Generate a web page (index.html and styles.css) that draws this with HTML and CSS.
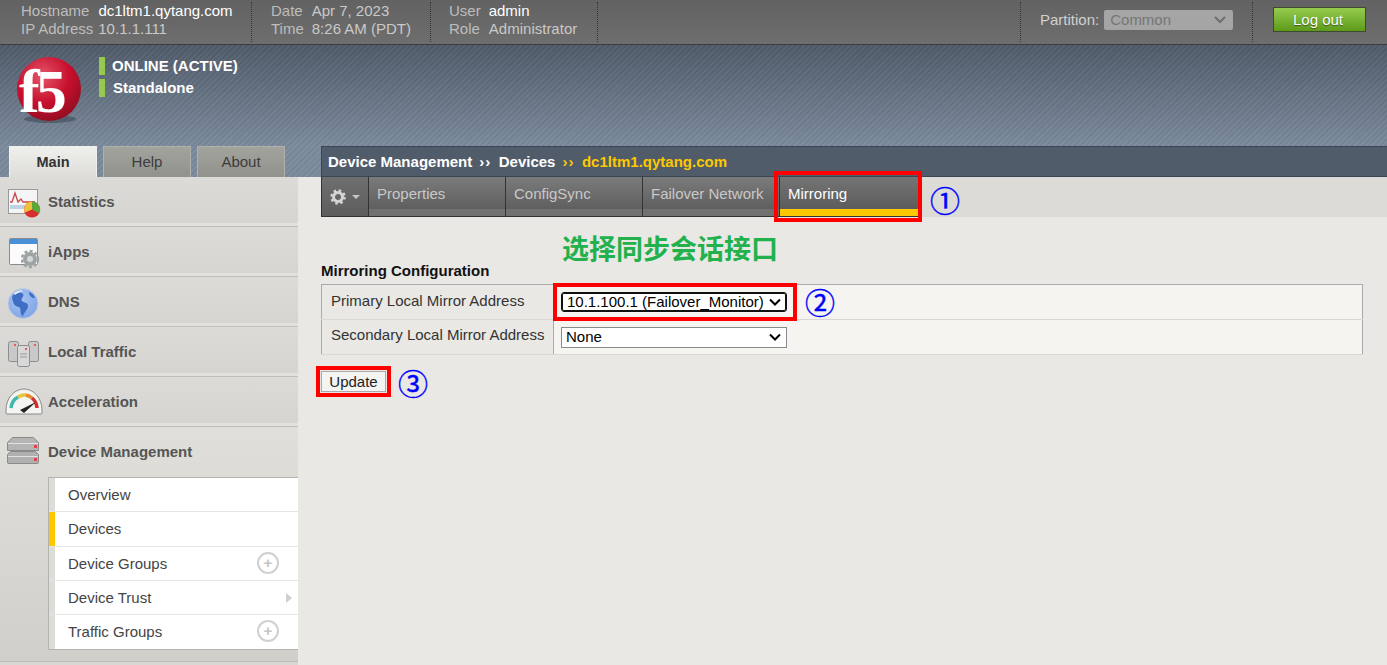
FILE: index.html
```html
<!DOCTYPE html>
<html lang="en">
<head>
    <meta charset="UTF-8">
    <meta name="viewport" content="width=device-width, initial-scale=1.0">
    <title>Mirroring</title>
    <link rel="stylesheet" href="styles.css">
</head>
<body>
    <header class="topbar">
        <div class="info info-host">
            <div><span class="key">Hostname</span><span class="val strong">dc1ltm1.qytang.com</span></div>
            <div><span class="key">IP Address</span><span class="val">10.1.1.111</span></div>
        </div>
        <div class="info info-date">
            <div><span class="key">Date</span><span class="val">Apr 7, 2023</span></div>
            <div><span class="key">Time</span><span class="val">8:26 AM (PDT)</span></div>
        </div>
        <div class="info info-user">
            <div><span class="key">User</span><span class="val strong">admin</span></div>
            <div><span class="key">Role</span><span class="val">Administrator</span></div>
        </div>
        <div class="partition">
            <span class="partition-label">Partition:</span>
            <div class="partition-select">
                <span>Common</span>
                <svg width="14" height="8" viewBox="0 0 14 8"><path d="M2 1l5 5 5-5" fill="none" stroke="#6f6f6f" stroke-width="2"/></svg>
            </div>
        </div>
        <div class="logout-wrap"><button class="logout">Log out</button></div>
    </header>

    <section class="banner">
        <div class="brand">
            <svg class="logo" width="70" height="70" viewBox="0 0 70 70">
                <defs>
                    <radialGradient id="ball" cx="0.4" cy="0.3" r="0.75">
                        <stop offset="0" stop-color="#e4566a"/>
                        <stop offset="0.55" stop-color="#c8102e"/>
                        <stop offset="1" stop-color="#8f0d20"/>
                    </radialGradient>
                </defs>
                <ellipse cx="33" cy="62" rx="26" ry="4" fill="#3d4650" opacity="0.55"/>
                <circle cx="32" cy="32" r="32" fill="url(#ball)"/>
                <text class="logo-text" x="2" y="55">f5</text>
            </svg>
            <div class="status">
                <div class="status-row">ONLINE (ACTIVE)</div>
                <div class="status-row status-sub">Standalone</div>
            </div>
        </div>
        <div class="banner-bottom">
            <nav class="tabs">
                <a class="tab tab-on">Main</a>
                <a class="tab">Help</a>
                <a class="tab">About</a>
            </nav>
            <div class="crumbs">
                <span>Device Management</span><span class="sep">››</span><span>Devices</span><span class="sep sep-cur">››</span><span class="cur">dc1ltm1.qytang.com</span>
            </div>
        </div>
    </section>

    <div class="layout">
        <aside class="sidebar">
            <div class="nav-item">
                <svg class="nav-icon" width="40" height="36" viewBox="0 0 40 36">
                    <rect x="3.500" y="5.500" width="29" height="24" fill="#f5f5f5" stroke="#999"/>
                    <rect x="5" y="21" width="26" height="4" fill="#bcd3e6"/>
                    <path d="M5 18h2l3-9 3 9 3-3 2 3h12" fill="none" stroke="#c8464a" stroke-width="1.300"/>
                    <circle cx="27" cy="25.500" r="8" fill="#d92c2c"/>
                    <path d="M27 25.500v-8a8 8 0 0 1 7 12z" fill="#5da63a"/>
                    <path d="M27 25.500v-8a8 8 0 0 0-8 8 8 8 0 0 0 1 3z" fill="#efc13a"/>
                </svg>
                <span>Statistics</span>
            </div>
            <div class="nav-item">
                <svg class="nav-icon" width="40" height="36" viewBox="0 0 40 36">
                    <rect x="4.500" y="4.500" width="28" height="26" rx="1" fill="#fbfbfb" stroke="#8a8a8a"/>
                    <rect x="5" y="5" width="27" height="5" fill="#4b8fd6"/>
                    <circle cx="25" cy="25" r="7" fill="#9ea4a6"/>
                    <circle cx="25" cy="25" r="8" fill="none" stroke="#9ea4a6" stroke-width="2.500" stroke-dasharray="3 2.300"/>
                    <circle cx="25" cy="25" r="3" fill="#d6d8d8"/>
                </svg>
                <span>iApps</span>
            </div>
            <div class="nav-item">
                <svg class="nav-icon" width="40" height="36" viewBox="0 0 40 36">
                    <defs>
                        <radialGradient id="globe" cx="0.4" cy="0.35" r="0.7">
                            <stop offset="0" stop-color="#a9c6f2"/>
                            <stop offset="1" stop-color="#7ea3e6"/>
                        </radialGradient>
                    </defs>
                    <circle cx="18" cy="19.500" r="15" fill="url(#globe)" stroke="#c3cfe2"/>
                    <path d="M8 11c4-3 8-3 10-1s-3 5-1 7 6 1 6 5-4 6-5 10c-3-1-2-6-3-8s-5-1-6-4-3-6-1-9zM24 8c3 1 5 3 6 6-3 0-6-2-6-6z" fill="#3e6fc4"/>
                    <path d="M9 9c3-2 6-3 9-2-3 1-6 2-8 4z" fill="#e8eef8"/>
                </svg>
                <span>DNS</span>
            </div>
            <div class="nav-item">
                <svg class="nav-icon" width="40" height="36" viewBox="0 0 40 36">
                    <rect x="3.500" y="7.500" width="10" height="20" rx="2" fill="#c9c9c9" stroke="#8d8d8d"/>
                    <rect x="23.500" y="7.500" width="10" height="20" rx="2" fill="#c9c9c9" stroke="#8d8d8d"/>
                    <rect x="12.500" y="11.500" width="12" height="21" rx="2" fill="#d8d8d8" stroke="#8d8d8d"/>
                    <rect x="9" y="10" width="2" height="2" fill="#e45a5a"/>
                    <rect x="29" y="10" width="2" height="2" fill="#e45a5a"/>
                    <rect x="20" y="14" width="2" height="2" fill="#e45a5a"/>
                    <path d="M15 20h7M15 23h7" stroke="#999"/>
                </svg>
                <span>Local Traffic</span>
            </div>
            <div class="nav-item">
                <svg class="nav-icon" width="40" height="36" viewBox="0 0 40 36">
                    <path d="M1 26a18 21 0 0 1 36 0v3q0 1-1 1H2q-1 0-1-1z" fill="#f4f4f0" stroke="#8a8a8a"/>
                    <path d="M6 24a13 14 0 0 1 7-11" fill="none" stroke="#3fb8ae" stroke-width="3.500"/>
                    <path d="M13 13a13 14 0 0 1 8-2" fill="none" stroke="#e8c33c" stroke-width="3.500"/>
                    <path d="M21 11a13 14 0 0 1 6 3" fill="none" stroke="#e58a32" stroke-width="3.500"/>
                    <path d="M27 14a13 14 0 0 1 5 10" fill="none" stroke="#d32f2f" stroke-width="3.500"/>
                    <path d="M15 26l16-8-12 11z" fill="#222"/>
                </svg>
                <span>Acceleration</span>
            </div>
            <div class="nav-group">
                <div class="nav-item nav-open">
                    <svg class="nav-icon" width="40" height="36" viewBox="0 0 40 36">
                        <path d="M7.500 4.500h21l5 5v8h-31v-8z" fill="#b5b5b5" stroke="#8a8a8a"/>
                        <path d="M3 10.500h30" stroke="#e2e2e2"/>
                        <path d="M5.500 18.500h25l3 3v8q0 1-1 1h-29q-1 0-1-1v-8z" fill="#b0b0b0" stroke="#8a8a8a"/>
                        <path d="M3 23.500h30" stroke="#e2e2e2"/>
                        <rect x="29" y="12" width="3" height="3" fill="#e8404a"/>
                        <rect x="29" y="25" width="3" height="3" fill="#e8404a"/>
                    </svg>
                    <span>Device Management</span>
                </div>
                <ul class="subnav">
                    <li>Overview</li>
                    <li class="sub-on">Devices</li>
                    <li>Device Groups<span class="plus">+</span></li>
                    <li>Device Trust<span class="arrow"></span></li>
                    <li class="sub-last">Traffic Groups<span class="plus">+</span></li>
                </ul>
            </div>
            <div class="nav-stub"></div>
        </aside>

        <main class="main">
            <div class="subtabs">
                <div class="gear">
                    <svg width="16" height="16" viewBox="0 0 16 16"><circle cx="8" cy="8" r="4.500" fill="none" stroke="#d4d4d4" stroke-width="3"/><circle cx="8" cy="8" r="6.500" fill="none" stroke="#d4d4d4" stroke-width="2.500" stroke-dasharray="2.500 2.600"/></svg>
                    <span class="caret"></span>
                </div>
                <div class="subtab">Properties</div>
                <div class="subtab">ConfigSync</div>
                <div class="subtab">Failover Network</div>
                <div class="subtab subtab-on">Mirroring</div>
            </div>
            <div class="content">
                <h2 class="section-title">Mirroring Configuration</h2>
                <table class="config">
                    <tr>
                        <th>Primary Local Mirror Address</th>
                        <td><select class="sel sel-focus"><option>10.1.100.1 (Failover_Monitor)</option></select></td>
                    </tr>
                    <tr>
                        <th class="th-second">Secondary Local Mirror Address</th>
                        <td><select class="sel"><option>None</option></select></td>
                    </tr>
                </table>
                <button class="update">Update</button>
            </div>
        </main>
    </div>

    <!-- annotations drawn on top of the screenshot -->
    <div class="mark mark-tab"></div>
    <div class="mark mark-select"></div>
    <div class="mark mark-update"></div>
    <span class="num num-1">①</span>
    <span class="num num-2">②</span>
    <span class="num num-3">③</span>
    <div class="note">选择同步会话接口</div>
</body>
</html>
```

FILE: styles.css
```css
html, body {
    margin: 0;
    padding: 0;
}
body {
    position: relative;
    width: 1387px;
    height: 665px;
    overflow: hidden;
    background-color: #e9e8e4;
    font-family: "Liberation Sans", Arial, sans-serif;
    font-size: 15px;
    color: #333;
}

/* top bar */
.topbar {
    display: flex;
    height: 44px;
    border-bottom: 1px solid #3a3c3e;
    background: linear-gradient(#626262, #6e6e6e);
    color: #c9c9c9;
    line-height: 18px;
}
.info {
    box-sizing: border-box;
    height: 40px;
    margin-top: 2px;
    border-right: 1px dotted #333;
    white-space: nowrap;
}
.info-host { width: 252px; padding-left: 21px; }
.info-date { width: 179px; padding-left: 19px; }
.info-user { width: 167px; padding-left: 18px; }
.key { color: #bdbdbd; }
.val { margin-left: 8px; }
.val.strong { color: #fff; }
.info-host .val { margin-left: 9px; }
.info-host div:last-child .val { margin-left: 5px; }
.info-date div:first-child .val { margin-left: 9px; }
.info-date div:last-child .val { margin-left: 8px; }
.info-user div:last-child .val { margin-left: 9px; }
.partition {
    display: flex;
    align-items: center;
    box-sizing: border-box;
    height: 40px;
    margin-top: 2px;
    margin-left: 422px;
    width: 233px;
    padding: 0 0 4px 19px;
    border-left: 1px dotted #333;
    border-right: 1px dotted #333;
}
.partition-label {
    color: #d0d0d0;
    margin-right: 5px;
}
.partition-select {
    display: flex;
    align-items: center;
    justify-content: space-between;
    box-sizing: border-box;
    width: 129px;
    height: 20px;
    padding: 0 6px;
    border-radius: 2px;
    background-color: #a5a5a5;
    color: #767676;
}
.logout-wrap {
    padding: 7px 0 0 20px;
}
.logout {
    width: 93px;
    height: 25px;
    padding: 0 3px 0 0;
    border: 1px solid #3e4a30;
    background: linear-gradient(#96cc4e, #5e9a1a);
    color: #fff;
    font-family: inherit;
    font-size: 15px;
    text-shadow: 0 1px 1px #3c5a14;
}

/* banner */
.banner {
    height: 132px;
    display: flex;
    flex-direction: column;
    justify-content: space-between;
    background:
        repeating-linear-gradient(135deg, rgba(255,255,255,0.035) 0 2px, rgba(0,0,0,0.035) 2px 4px),
        linear-gradient(#4f5b69 0, #7b8a9d 100px);
}
.brand {
    display: flex;
    padding: 12px 0 0 17px;
}
.logo {
    display: block;
}
.logo-text {
    font-family: "Liberation Serif", serif;
    font-weight: bold;
    font-size: 62px;
    letter-spacing: -4px;
    fill: #fff;
}
.status {
    margin-left: 12px;
    color: #fff;
    font-weight: bold;
}
.status-row {
    height: 18px;
    line-height: 18px;
    margin-bottom: 4px;
    padding-left: 7px;
    border-left: 6px solid #97c94f;
}
.status-sub {
    padding-left: 8px;
}
.banner-bottom {
    display: flex;
    align-items: flex-end;
}
.tabs {
    display: flex;
    gap: 6px;
    width: 321px;
    padding-left: 9px;
    box-sizing: border-box;
}
.tab {
    box-sizing: border-box;
    width: 88px;
    height: 31px;
    line-height: 30px;
    text-align: center;
    border: 1px solid #b1b1ab;
    border-bottom: none;
    background: linear-gradient(#a3a39e, #92928d);
    color: #3c3c3c;
}
.tab-on {
    border-color: #f0f0ec;
    background: linear-gradient(#f0f0ec, #dddcd8);
    color: #333;
    font-weight: bold;
    font-size: 14.500px;
}
.crumbs {
    flex: 1;
    display: flex;
    align-items: center;
    box-sizing: border-box;
    height: 31px;
    padding-left: 6px;
    border: 1px solid #3c4652;
    border-right: none;
    background-color: #505c6a;
    color: #fff;
    font-weight: bold;
}
.sep {
    margin: 0 7.500px 0 7px;
    letter-spacing: 1px;
}
.sep-cur, .cur {
    color: #fdc800;
}

/* body area */
.layout {
    display: flex;
}
.sidebar {
    width: 298px;
    flex: none;
    background-color: #d9d8d4;
}
.nav-item {
    box-sizing: border-box;
    display: flex;
    align-items: center;
    height: 50px;
    padding-left: 5px;
    border-bottom: 1px solid #bfbeba;
    box-shadow: inset 0 -3px 0 #e2e1dd;
    background: linear-gradient(#dcdbd7, #d5d4d0);
    color: #555;
    font-weight: bold;
}
.nav-icon {
    flex: none;
    width: 40px;
    margin-right: 3px;
}
.nav-group {
    padding-bottom: 11px;
    background: linear-gradient(#e0dfda, #d0cfca);
}
.nav-open {
    padding-bottom: 2px;
    border-bottom: none;
    box-shadow: none;
    background: none;
}
.subnav {
    list-style: none;
    margin: 0 0 0 48px;
    padding: 0;
    border: 1px solid #b3b3b0;
    border-right: none;
    background-color: #fff;
}
.subnav li {
    position: relative;
    box-sizing: border-box;
    height: 34px;
    line-height: 33px;
    padding-left: 19px;
    border-bottom: 1px solid #e6e6e4;
    box-shadow: inset 6px 0 0 #dcdcda;
    color: #444;
}
.subnav .sub-on {
    height: 35px;
    line-height: 34px;
    box-shadow: inset 6px 0 0 #fdc800;
}
.subnav .sub-last {
    border-bottom: none;
}
.plus {
    position: absolute;
    right: 19px;
    top: 5px;
    box-sizing: border-box;
    width: 22px;
    height: 22px;
    border: 2px solid #d0d0d0;
    border-radius: 50%;
    text-align: center;
    line-height: 17px;
    font-weight: bold;
    color: #c4c4c4;
}
.arrow {
    position: absolute;
    right: 6px;
    top: 12px;
    border-left: 6px solid #cfcfcf;
    border-top: 5px solid transparent;
    border-bottom: 5px solid transparent;
}
.nav-stub {
    height: 4px;
    border-top: 1px solid #bfbeba;
    box-sizing: border-box;
}
.main {
    flex: 1;
    padding-left: 23px;
}
.subtabs {
    display: flex;
    height: 40px;
    background-color: #dcdbd6;
}
.gear {
    box-sizing: border-box;
    display: flex;
    align-items: center;
    gap: 6px;
    width: 48px;
    height: 40px;
    padding: 0 0 0 8px;
    border: 1px solid #333;
    border-top: none;
    background: linear-gradient(#6f6f6f, #5d5d5d);
}
.caret {
    border-top: 4px solid #c4c4c4;
    border-left: 4px solid transparent;
    border-right: 4px solid transparent;
}
.subtab {
    box-sizing: border-box;
    width: 137px;
    height: 40px;
    padding: 8px 0 0 8px;
    border-right: 1px solid #333;
    border-bottom: 1px solid #333;
    background: linear-gradient(#7b7b7b, #5f5f5f 82%, #717171 82%, #717171);
    color: #c8c8c8;
}
.subtab-on {
    width: 140px;
    padding-left: 8px;
    background: linear-gradient(#747474, #5c5c5c 82%, #fdc800 82%);
    color: #fff;
}
.content {
    padding: 46px 24px 0 0;
}
.section-title {
    margin: 0 0 5px;
    font-size: 15px;
    line-height: 16px;
    color: #111;
}
.config {
    width: 100%;
    border-collapse: collapse;
    border: 1px solid #aaa;
    background-color: #f5f4f1;
}
.config th, .config td {
    height: 34px;
    padding: 0 7px;
    border-bottom: 1px solid #d8d8d4;
    text-align: left;
    font-weight: normal;
}
.config th {
    box-sizing: border-box;
    width: 232px;
    padding: 0 0 3px 9px;
    background-color: #e9e8e4;
    border-right: 1px solid #aaa;
    color: #333;
    white-space: nowrap;
}
.config .th-second {
    padding-bottom: 5px;
}
.sel {
    display: block;
    box-sizing: border-box;
    width: 226px;
    height: 21px;
    padding: 0 0 0 4px;
    border: 1px solid #8a8a8a;
    appearance: none;
    background: #fff url("data:image/svg+xml,%3Csvg xmlns='http://www.w3.org/2000/svg' width='12' height='8'%3E%3Cpath d='M1 1.500l5 5 5-5' fill='none' stroke='%23000' stroke-width='2'/%3E%3C/svg%3E") no-repeat right 5px center;
    font-family: inherit;
    font-size: 15px;
    line-height: 18px;
    color: #000;
}
.sel-focus {
    height: 20px;
    margin-bottom: 1px;
    border: 1px solid #111;
    border-radius: 3px;
    box-shadow: inset 0 0 0 1px #111;
    padding-left: 5px;
}
.update {
    display: block;
    width: 65px;
    height: 21px;
    margin: 16px 0 0 0;
    padding: 0;
    border: 1px solid #aaa;
    background-color: #f4f4f2;
    font-family: inherit;
    font-size: 15px;
    color: #222;
}

/* annotations */
.mark {
    position: absolute;
    box-sizing: border-box;
    border: 4px solid #f00;
}
.mark-tab { left: 774px; top: 171px; width: 148px; height: 51px; }
.mark-select { left: 553px; top: 283px; width: 244px; height: 38px; }
.mark-update { left: 316px; top: 366px; width: 75px; height: 31px; }
.num {
    position: absolute;
    font-family: "Noto Sans CJK SC", sans-serif;
    font-size: 30px;
    line-height: 30px;
    color: #00f;
    -webkit-text-stroke: 0.4px #00f;
}
.num-1 { left: 930px; top: 184px; }
.num-2 { left: 805px; top: 286px; }
.num-3 { left: 398px; top: 367px; }
.note {
    position: absolute;
    left: 562px;
    top: 231px;
    font-family: "Noto Sans CJK SC", sans-serif;
    font-weight: bold;
    font-size: 27px;
    line-height: 34px;
    color: #22b14c;
}
```
